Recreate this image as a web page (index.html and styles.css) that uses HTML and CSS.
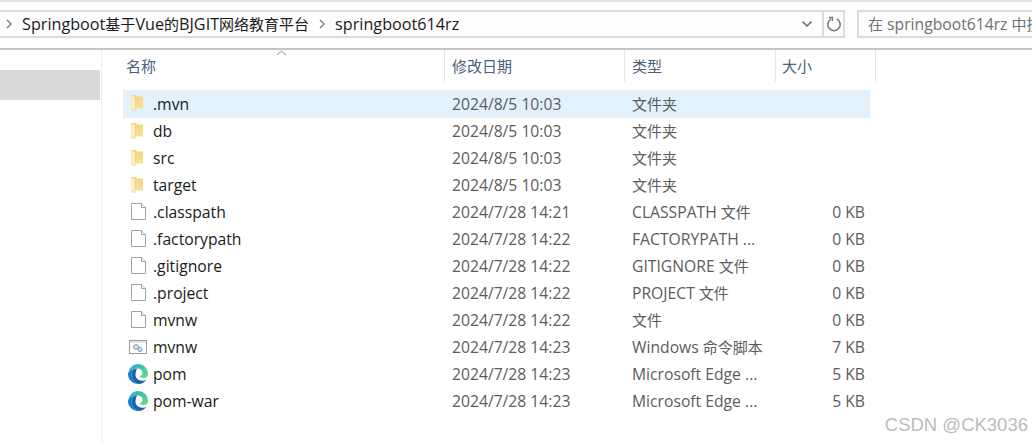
FILE: index.html
```html
<!DOCTYPE html>
<html lang="zh-CN">
<head>
<meta charset="utf-8">
<title>springboot614rz</title>
<link rel="stylesheet" href="styles.css">
</head>
<body>
<svg class="defs" width="0" height="0" aria-hidden="true">
  <defs>
    <linearGradient id="fg" x1="0" y1="0" x2="0" y2="1"><stop offset="0" stop-color="#f5d67f"/><stop offset="1" stop-color="#f9e09a"/></linearGradient>
    <linearGradient id="eg" x1="0" y1="0" x2="1" y2="1"><stop offset="0" stop-color="#1fa8d8"/><stop offset="1" stop-color="#6fe07a"/></linearGradient>
    <symbol id="folder" viewBox="0 0 12 16">
      <path d="M0 0h5l1 1.500h6V13.500H3z" fill="url(#fg)"/>
      <path d="M0 0l4 1.800V16L0 14z" fill="#fdf1c8" stroke="#eccb75" stroke-width=".6"/>
    </symbol>
    <symbol id="file" viewBox="0 0 15 17">
      <path d="M.5 .5h10l4 4v12H.5z" fill="#fff" stroke="#a3a3a3"/>
      <path d="M10.500 .5v4h4" fill="#f2f2f2" stroke="#a3a3a3"/>
    </symbol>
    <symbol id="script" viewBox="0 0 18 14">
      <rect x=".5" y=".5" width="17" height="13" fill="#fff" stroke="#9a9a9a"/>
      <path d="M1 1h16v2H1z" fill="#e4e4e4"/>
      <circle cx="7" cy="7" r="2.400" fill="#e6e6e6" stroke="#8f8f8f"/>
      <circle cx="11" cy="9.500" r="2" fill="#cfe4f6" stroke="#6d9cc4"/>
    </symbol>
    <symbol id="edge" viewBox="0 0 20 20">
      <path d="M10 0a10 10 0 0 1 10 10.500c0 2.300-1.800 3.500-4 3.500-2 0-4-.6-4.500-1.800 2-.5 3-1.700 3-3.300C14.500 6 12 4.500 9 4.500 5 4.500 2 6.500.2 9 1 4 5 0 10 0z" fill="url(#eg)"/>
      <path d="M.2 9C2 6.500 5 4.500 9 4.500c-3 0-5.600 2.600-5.600 6 0 4 3 8 7 9.500C4.500 20 0 15.500 0 10z" fill="#0f7fc9"/>
      <path d="M9 4.500c-3 0-5.600 2.600-5.600 6 0 4 3 8 7 9.500 3.500 0 6.500-1.800 8.300-4.500-1 .8-2.700 1.300-4.500 1.300-4 0-6.700-2.800-6.700-6 0-2.500 1-5 1.500-6.300z" fill="#1a5fb0"/>
    </symbol>
  </defs>
</svg>
<div class="window">
  <header class="toolbar">
    <div class="address">
      <span class="chev">
        <svg width="8" height="12" viewBox="0 0 8 12"><path d="M2 2l4 4-4 4" fill="none" stroke="#7a7a7a" stroke-width="1.400"/></svg>
      </span>
      <span class="crumb">Springboot<span class="cjk">基于</span>Vue<span class="cjk">的</span>BJGIT<span class="cjk">网络教育平台</span></span>
      <span class="chev">
        <svg width="8" height="12" viewBox="0 0 8 12"><path d="M2 2l4 4-4 4" fill="none" stroke="#7a7a7a" stroke-width="1.400"/></svg>
      </span>
      <span class="crumb">springboot614rz</span>
      <span class="drop">
        <svg width="12" height="8" viewBox="0 0 12 8"><path d="M1.500 1.500L6 6l4.500-4.500" fill="none" stroke="#666" stroke-width="1.500"/></svg>
      </span>
      <span class="refresh">
        <svg width="16" height="16" viewBox="0 0 16 16"><path d="M5.300 2.900a6.200 6.200 0 1 0 5.400 0" fill="none" stroke="#7b7b7b" stroke-width="1.600"/><path d="M3 1.500h3.500V5" fill="none" stroke="#7b7b7b" stroke-width="1.400"/></svg>
      </span>
    </div>
    <div class="search"><span class="cjk">在</span> springboot614rz <span class="cjk">中搜索</span></div>
  </header>
  <div class="main">
    <nav class="side"><div class="side-sel"></div></nav>
    <section class="list">
      <div class="head">
        <div class="hc hc-name">名称<svg class="sort" width="11" height="6" viewBox="0 0 11 6"><path d="M1 5l4.500-4L10 5" fill="none" stroke="#8a8a8a"/></svg></div>
        <div class="hc hc-date">修改日期</div>
        <div class="hc hc-type">类型</div>
        <div class="hc hc-size">大小</div>
      </div>
      <div class="rows">
        <div class="row sel"><span class="ic"><svg class="i-folder"><use href="#folder"/></svg></span><span class="name">.mvn</span><span class="date">2024/8/5 10:03</span><span class="type"><span class="cjk">文件夹</span></span><span class="size"></span></div>
        <div class="row"><span class="ic"><svg class="i-folder"><use href="#folder"/></svg></span><span class="name">db</span><span class="date">2024/8/5 10:03</span><span class="type"><span class="cjk">文件夹</span></span><span class="size"></span></div>
        <div class="row"><span class="ic"><svg class="i-folder"><use href="#folder"/></svg></span><span class="name">src</span><span class="date">2024/8/5 10:03</span><span class="type"><span class="cjk">文件夹</span></span><span class="size"></span></div>
        <div class="row"><span class="ic"><svg class="i-folder"><use href="#folder"/></svg></span><span class="name">target</span><span class="date">2024/8/5 10:03</span><span class="type"><span class="cjk">文件夹</span></span><span class="size"></span></div>
        <div class="row"><span class="ic"><svg class="i-file"><use href="#file"/></svg></span><span class="name">.classpath</span><span class="date">2024/7/28 14:21</span><span class="type">CLASSPATH <span class="cjk">文件</span></span><span class="size">0 KB</span></div>
        <div class="row"><span class="ic"><svg class="i-file"><use href="#file"/></svg></span><span class="name">.factorypath</span><span class="date">2024/7/28 14:22</span><span class="type">FACTORYPATH ...</span><span class="size">0 KB</span></div>
        <div class="row"><span class="ic"><svg class="i-file"><use href="#file"/></svg></span><span class="name">.gitignore</span><span class="date">2024/7/28 14:22</span><span class="type">GITIGNORE <span class="cjk">文件</span></span><span class="size">0 KB</span></div>
        <div class="row"><span class="ic"><svg class="i-file"><use href="#file"/></svg></span><span class="name">.project</span><span class="date">2024/7/28 14:22</span><span class="type">PROJECT <span class="cjk">文件</span></span><span class="size">0 KB</span></div>
        <div class="row"><span class="ic"><svg class="i-file"><use href="#file"/></svg></span><span class="name">mvnw</span><span class="date">2024/7/28 14:22</span><span class="type"><span class="cjk">文件</span></span><span class="size">0 KB</span></div>
        <div class="row"><span class="ic"><svg class="i-script"><use href="#script"/></svg></span><span class="name">mvnw</span><span class="date">2024/7/28 14:23</span><span class="type">Windows <span class="cjk">命令脚本</span></span><span class="size">7 KB</span></div>
        <div class="row"><span class="ic"><svg class="i-edge"><use href="#edge"/></svg></span><span class="name">pom</span><span class="date">2024/7/28 14:23</span><span class="type">Microsoft Edge ...</span><span class="size">5 KB</span></div>
        <div class="row"><span class="ic"><svg class="i-edge"><use href="#edge"/></svg></span><span class="name">pom-war</span><span class="date">2024/7/28 14:23</span><span class="type">Microsoft Edge ...</span><span class="size">5 KB</span></div>
      </div>
    </section>
  </div>
</div>
<div class="mark">CSDN @CK3036</div>
</body>
</html>
```
FILE: styles.css
```css
* { box-sizing: border-box; }
html, body { margin: 0; height: 444px; overflow: hidden; background: #fff; }
body { font-family: "Open Sans", "Noto Sans CJK SC", sans-serif; font-size: 15.700px; color: #1a1a1a; position: relative; }
.defs { position: absolute; }
.cjk { font-size: 15px; }
.window { display: flex; flex-direction: column; height: 444px; width: 1032px; }
.toolbar { height: 50px; flex: none; border-top: 2px solid #e3e3e6; border-bottom: 2px solid #c4c4c4; padding-top: 8px; display: flex; gap: 12px; align-items: flex-start; background: #fdfdfd; }
.address { width: 845px; height: 28px; flex: none; border: 2px solid #dcdcdc; border-left: 0; display: flex; align-items: center; }
.chev { display: flex; width: 22px; justify-content: flex-start; padding-left: 5px; flex: none; }
.crumb { white-space: nowrap; margin-right: 4px; color: #1a1a1a; font-size: 16.200px; }
.drop { margin-left: auto; width: 16px; display: flex; margin-right: 5px; }
.refresh { width: 21px; height: 100%; border-left: 2px solid #dcdcdc; display: flex; align-items: center; justify-content: center; flex: none; }
.search { flex: none; width: 190px; height: 28px; border: 2px solid #dcdcdc; border-right: 0; color: #707070; line-height: 24px; padding-left: 9px; white-space: nowrap; overflow: hidden; }
.main { flex: 1; display: flex; min-height: 0; }
.side { width: 102px; flex: none; border-right: 1px solid #eeeeee; padding-top: 20px; }
.side-sel { width: 100px; height: 30px; background: #d9d9d9; }
.list { flex: 1; }
.head { display: flex; height: 32px; }
.hc { border-right: 1px solid #e5e5e5; color: #4c607a; font-size: 15px; padding: 5px 0 0 7px; line-height: 22px; position: relative; }
.hc-name { width: 343px; padding-left: 24px; }
.hc-date { width: 180px; }
.hc-type { width: 151px; }
.hc-size { width: 100px; padding-left: 6px; }
.sort { position: absolute; left: 174px; top: 0; }
.rows { padding: 8px 0 0 21px; }
.row { width: 747px; height: 27px; display: flex; align-items: center; line-height: 27px; }
.row.sel { background: #e3f1fc; height: 28px; }
.ic { width: 30px; flex: none; display: flex; align-items: center; justify-content: flex-start; margin-bottom: 2px; }
.i-folder { width: 12px; height: 16px; margin-left: 8px; }
.i-file { width: 15px; height: 17px; margin-left: 8px; }
.i-script { width: 18px; height: 14px; margin-left: 6px; }
.i-edge { width: 20px; height: 20px; margin-left: 5px; }
.name { width: 299px; flex: none; color: #1a1a1a; }
.date { width: 180px; flex: none; color: #5c5c5c; }
.type { width: 170px; flex: none; color: #5c5c5c; white-space: nowrap; }
.size { width: 63px; flex: none; color: #5c5c5c; text-align: right; }
.mark { position: absolute; right: 4px; top: 415px; font-family: "Liberation Sans", sans-serif; font-size: 18.500px; color: #bcbcbc; line-height: 20px; }
```
